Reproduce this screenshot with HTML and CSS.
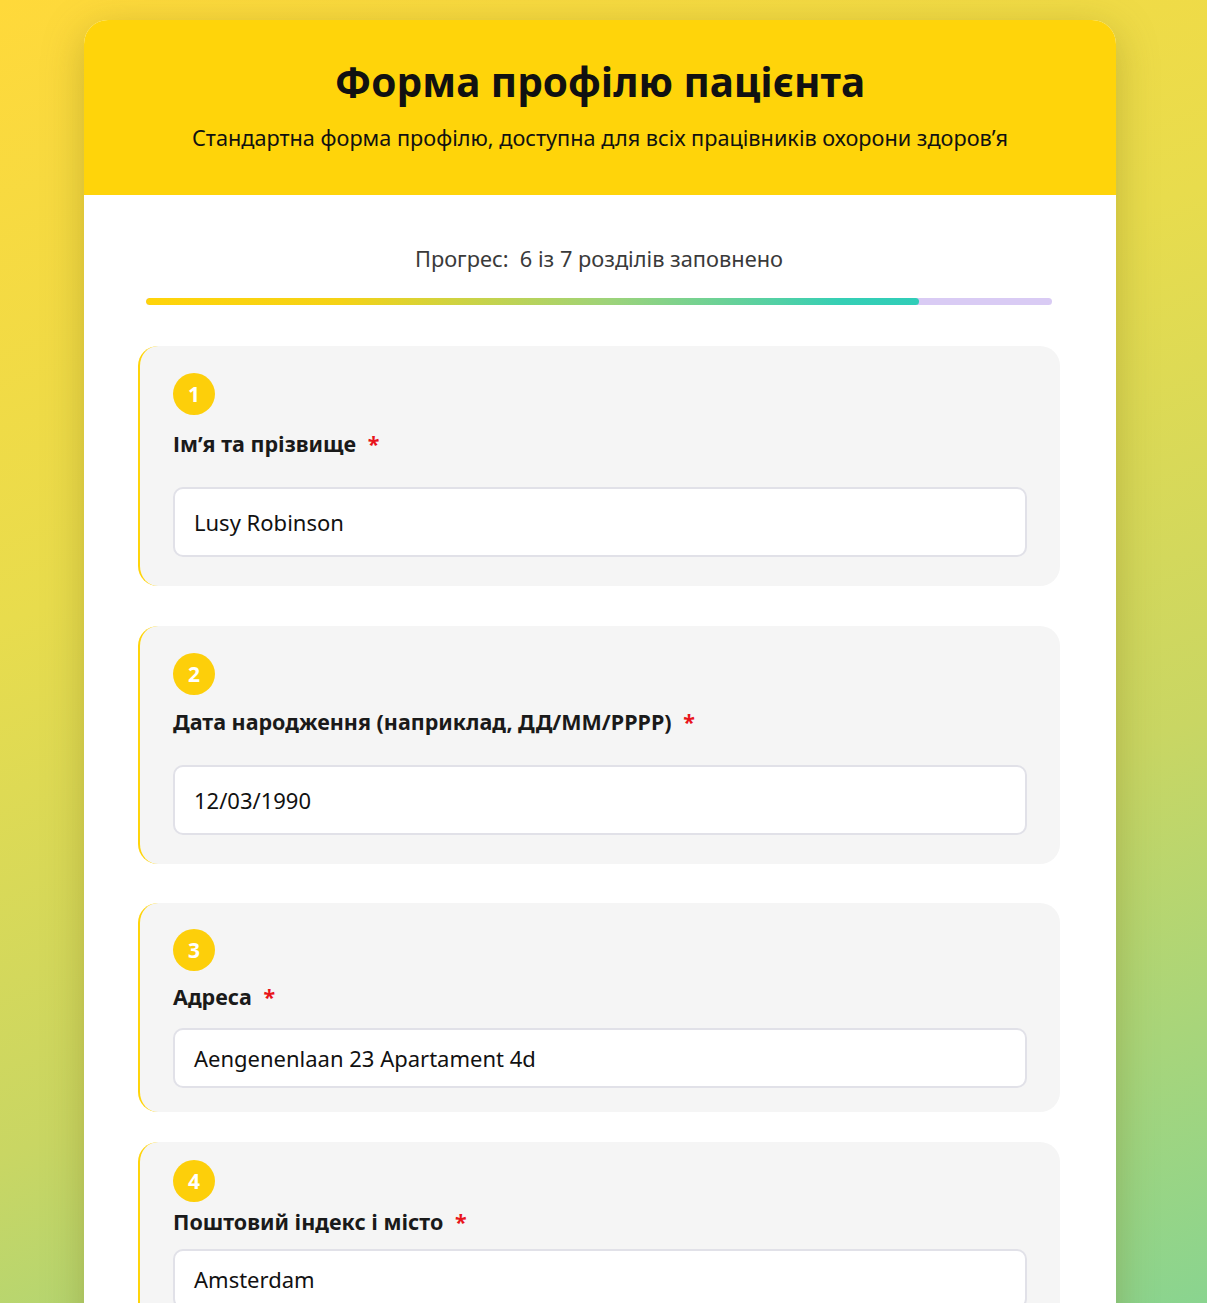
FILE: index.html
```html
<!DOCTYPE html>
<html lang="uk">
<head>
<meta charset="utf-8">
<title>Форма профілю пацієнта</title>
<link rel="stylesheet" href="styles.css">
</head>
<body>
<div class="page">
  <main class="card">
    <header class="card-header">
      <h1 class="title">Форма профілю пацієнта</h1>
      <p class="subtitle">Стандартна форма профілю, доступна для всіх працівників охорони здоров’я</p>
    </header>
    <div class="card-body">
      <div class="progress">
        <p class="progress-text">Прогрес:&nbsp; 6 із 7 розділів заповнено</p>
        <div class="progress-track"><div class="progress-fill" style="width: 85.3%"></div></div>
      </div>

      <section class="field field-1">
        <span class="badge">1</span>
        <label class="label">Ім’я та прізвище <span class="req">*</span></label>
        <div class="input input-tall">Lusy Robinson</div>
      </section>

      <section class="field field-2">
        <span class="badge">2</span>
        <label class="label">Дата народження (наприклад, ДД/ММ/РРРР) <span class="req">*</span></label>
        <div class="input input-tall">12/03/1990</div>
      </section>

      <section class="field field-3">
        <span class="badge">3</span>
        <label class="label">Адреса <span class="req">*</span></label>
        <div class="input">Aengenenlaan 23 Apartament 4d</div>
      </section>

      <section class="field field-4">
        <span class="badge">4</span>
        <label class="label">Поштовий індекс і місто <span class="req">*</span></label>
        <div class="input">Amsterdam</div>
      </section>
    </div>
  </main>
</div>
</body>
</html>
```

FILE: styles.css
```css
* { box-sizing: border-box; }
html, body { margin: 0; padding: 0; }
body {
  min-height: 1303px;
  font-family: "Noto Sans", "Open Sans", sans-serif;
  color: #111;
  background: linear-gradient(160deg, #ffd93a 0%, #e8dc4d 35%, #c9d663 65%, #86d492 100%);
  overflow: hidden;
}
.page {
  padding: 20px 0 0 84px;
}
.card {
  width: 1032px;
  background: #fff;
  border-radius: 24px 24px 0 0;
  overflow: hidden;
  box-shadow: 0 10px 40px rgba(120, 110, 20, 0.35);
  min-height: 1283px;
}
.card-header {
  background: #ffd40a;
  height: 175px;
  text-align: center;
  padding-top: 37px;
}
.title {
  margin: 0;
  font-size: 40.5px;
  font-weight: 700;
  line-height: 50px;
  color: #111;
}
.subtitle {
  margin: 16px 0 0;
  font-size: 21.7px;
  line-height: 30px;
  color: #111;
}
.card-body {
  padding: 49px 56px 0 54px;
}
.progress {
  padding: 0 8px;
  margin-bottom: 41px;
}
.progress-text {
  margin: 0;
  text-align: center;
  font-size: 21.8px;
  line-height: 30px;
  color: #3a3a3a;
}
.progress-track {
  margin-top: 24px;
  height: 7px;
  border-radius: 4px;
  background: #d9cbf4;
  overflow: hidden;
}
.progress-fill {
  height: 100%;
  border-radius: 4px;
  background: linear-gradient(90deg, #ffd40a 0%, #f5d215 25%, #9dd37a 60%, #35cfb5 90%, #30cdb8 100%);
}
.field {
  background: #f5f5f5;
  border-radius: 20px;
  border-left: 2px solid #ffd40a;
  padding: 27px 33px 29px 33px;
  display: flex;
  flex-direction: column;
  align-items: flex-start;
}
.field-1 { margin-bottom: 40px; }
.field-2 { margin-bottom: 39px; }
.field-3 { margin-bottom: 30px; padding-bottom: 24px; padding-top: 26px; }
.field-4 { padding-top: 18px; }
.badge {
  width: 42px;
  height: 42px;
  border-radius: 50%;
  background: #fdcf0a;
  color: #fff;
  font-weight: 700;
  font-size: 21px;
  display: flex;
  align-items: center;
  justify-content: center;
}
.label {
  margin-top: 14px;
  font-size: 21.5px;
  font-weight: 700;
  line-height: 30px;
  color: #1a1a1a;
}
.field-2 .label { margin-top: 12px; }
.field-3 .label { margin-top: 11px; }
.field-4 .label { margin-top: 5px; }
.req {
  color: #e8141b;
  margin-left: 6px;
}
.input {
  margin-top: 28px;
  width: 100%;
  height: 60px;
  background: #fff;
  border: 2px solid #e1e1e8;
  border-radius: 10px;
  padding: 0 19px;
  display: flex;
  align-items: center;
  font-size: 22px;
  color: #111;
}
.input-tall { height: 70px; }
.field-3 .input { margin-top: 16px; }
.field-4 .input { margin-top: 12px; }
```
